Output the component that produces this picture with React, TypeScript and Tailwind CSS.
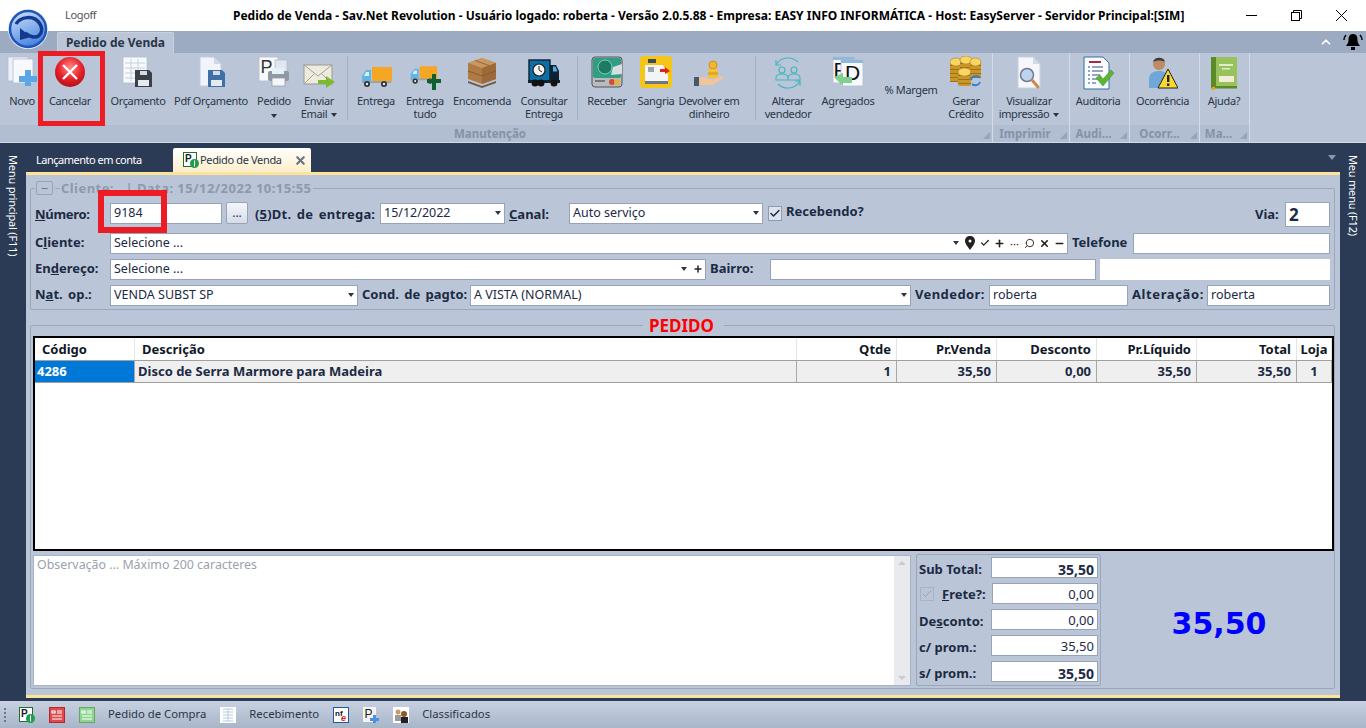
import { ReactNode } from "react"
import { Check, ChevronUp, Search, X, Minus, Plus } from "lucide-react"

const ink = "text-[#1c2a44]"

// ---- ribbon icons ----
const Sheet = ({ x, y, w, h, fill = "#f7f9fc" }: { x: number; y: number; w: number; h: number; fill?: string }) => (
  <rect x={x} y={y} width={w} height={h} fill={fill} stroke="#b4bccb" strokeWidth="0.8" />
)

const Floppy = ({ x, y, c = "#3a3f48" }: { x: number; y: number; c?: string }) => (
  <g transform={`translate(${x} ${y})`}>
    <path d="M0 0h14l3 3v14H0z" fill={c} />
    <rect x="5" y="1" width="7" height="4" fill="#d5dbe2" />
    <rect x="3" y="10" width="11" height="6" fill="#e6eaef" />
  </g>
)

const Truck = () => (
  <>
    <rect x="12" y="7" width="20" height="15" rx="1" fill="#f5a623" />
    <path d="M11 10H6l-4 6v6h9z" fill="#5db5ea" />
    <path d="M6 12h3v4H4z" fill="#d8eefb" />
    <rect x="2" y="21" width="29" height="2" fill="#9aa3ad" />
    <circle cx="7" cy="24" r="3" fill="#333" /><circle cx="7" cy="24" r="1.2" fill="#eee" />
    <circle cx="24" cy="24" r="3" fill="#333" /><circle cx="24" cy="24" r="1.2" fill="#eee" />
  </>
)

const CoinStack = ({ x, y, h, w = 12 }: { x: number; y: number; h: number; w?: number }) => (
  <g>
    <rect x={x} y={y} width={w} height={h} rx="2" fill="#c9962a" />
    {Array.from({ length: Math.floor(h / 4) }).map((_, i) => (
      <rect key={i} x={x} y={y + 3 + i * 4} width={w} height="1" fill="#9e7318" />
    ))}
    <ellipse cx={x + w / 2} cy={y} rx={w / 2} ry="4" fill="#f8d665" stroke="#b98620" strokeWidth="0.7" />
  </g>
)

const icons: Record<string, ReactNode> = {
  novo: (
    <svg width="30" height="30" viewBox="0 0 30 30">
      <Sheet x={1} y={1} w={20} h={24} fill="#eef2f8" />
      <Sheet x={6} y={3} w={20} h={24} />
      <path d="M18 14h6v6h6v6h-6v4h-6v-4h-6v-6h6z" fill="#5ba6e6" />
    </svg>
  ),
  cancelar: (
    <svg width="32" height="32" viewBox="0 0 32 32">
      <defs>
        <radialGradient id="redball" cx="50%" cy="35%" r="70%">
          <stop offset="0%" stopColor="#ff8a8a" />
          <stop offset="55%" stopColor="#e8222a" />
          <stop offset="100%" stopColor="#a90f14" />
        </radialGradient>
      </defs>
      <circle cx="16" cy="16" r="15" fill="url(#redball)" />
      <path d="M9 9l14 14M23 9L9 23" stroke="#fff" strokeWidth="2.4" />
    </svg>
  ),
  orcamento: (
    <svg width="32" height="32" viewBox="0 0 32 32">
      <Sheet x={1} y={1} w={24} h={26} />
      <path d="M3 7h20M3 12h20M3 17h12M3 22h12M9 3v22M16 3v14" stroke="#c3d3dc" strokeWidth="1" />
      <Floppy x={13} y={14} />
    </svg>
  ),
  pdf: (
    <svg width="32" height="32" viewBox="0 0 32 32">
      <path d="M5 1h14l7 7v22H5z" fill="#f1f4fb" stroke="#c3cbdc" />
      <path d="M19 1v7h7z" fill="#cfd8e8" />
      <Floppy x={13} y={14} c="#3f6fa8" />
    </svg>
  ),
  pedido: (
    <svg width="32" height="32" viewBox="0 0 32 32">
      <Sheet x={1} y={1} w={19} h={24} />
      <text x="2.5" y="17" fontFamily="Liberation Sans" fontSize="18" fill="#333">P</text>
      <Sheet x={17} y={4} w={12} h={12} fill="#dfe7ef" />
      <rect x="10" y="15" width="21" height="10" rx="2" fill="#8f98a3" />
      <rect x="14" y="12" width="12" height="6" fill="#e6f0f7" />
      <rect x="14" y="22" width="13" height="8" fill="#f4f6f9" stroke="#8f98a3" strokeWidth="0.7" />
    </svg>
  ),
  email: (
    <svg width="32" height="34" viewBox="0 0 32 34">
      <g transform="translate(0 7)">
        <rect x="1" y="2" width="28" height="19" fill="#eeeadd" stroke="#9c9a90" />
        <path d="M1 2l14 11L29 2M1 21l10-10M29 21L19 11" fill="none" stroke="#a5a396" />
        <path d="M15 17h8v-4l9 6-9 6v-4h-8z" fill="#7dbb2e" />
      </g>
    </svg>
  ),
  entrega: (
    <svg width="32" height="34" viewBox="0 0 32 34"><g transform="translate(0 4)"><Truck /></g></svg>
  ),
  tudo: (
    <svg width="32" height="34" viewBox="0 0 32 34">
      <g transform="translate(0 4) scale(.88)"><Truck /></g>
      <path d="M18 23h5v-5h4v5h5v4h-5v7h-4v-7h-5z" fill="#0f5f30" />
    </svg>
  ),
  encomenda: (
    <svg width="32" height="32" viewBox="0 0 32 32">
      <path d="M2 7l14-5 14 5v16l-14 5-14-5z" fill="#b07a45" />
      <path d="M2 7l14 5 14-5-14-5z" fill="#c9975f" />
      <path d="M16 12v16l14-5V7z" fill="#9c6a3a" />
      <path d="M2 15l14 5 14-5M9 4.500l14 5" fill="none" stroke="#7d532b" strokeWidth="0.7" />
      <path d="M2 25l14 5 14-5v2l-14 5-14-5z" fill="#6f5a44" />
    </svg>
  ),
  consultar: (
    <svg width="32" height="32" viewBox="0 0 32 32">
      <g transform="translate(0 2)">
        <rect x="1" y="2" width="21" height="21" fill="#0c6ea3" stroke="#0a2233" strokeWidth="1.4" />
        <circle cx="11" cy="12" r="6" fill="#f4f4f4" stroke="#222" strokeWidth="1.2" />
        <path d="M11 8v4l3 2" stroke="#222" fill="none" />
        <path d="M22 7h6l3 6v10h-9z" fill="#0c2233" />
        <path d="M25 8.500h2.500l2 5H25z" fill="#49aee8" />
        <rect x="0" y="22" width="32" height="3" fill="#10222f" />
        <circle cx="7" cy="25" r="3.500" fill="#111" /><circle cx="13" cy="25" r="3.500" fill="#111" /><circle cx="26" cy="25" r="3.500" fill="#111" />
      </g>
    </svg>
  ),
  receber: (
    <svg width="32" height="32" viewBox="0 0 32 32">
      <rect x="1" y="1" width="30" height="30" rx="3" fill="#b8bcc0" stroke="#555" />
      <rect x="2" y="2" width="28" height="20" rx="2" fill="#2f9e83" />
      <circle cx="14" cy="11" r="7" fill="#1f7a64" stroke="#7fd0bb" />
      <path d="M31 8l-9 3-2 8 11-1z" fill="#d8dde0" />
      <rect x="4" y="24" width="10" height="2" fill="#777" />
      <circle cx="21" cy="26" r="3" fill="#d24b3a" /><circle cx="26" cy="26" r="3" fill="#e2b23a" />
    </svg>
  ),
  sangria: (
    <svg width="32" height="32" viewBox="0 0 32 32">
      <rect x="0" y="0" width="32" height="32" rx="4" fill="#f5c518" />
      <rect x="8" y="3" width="8" height="4" fill="#3a4a5c" />
      <path d="M5 9h18l5 10v6H5z" fill="#f2f4f6" />
      <rect x="8" y="11" width="6" height="5" fill="#9aa5b0" />
      <path d="M20 13h5v-2l5 4-5 3v-2h-5z" fill="#e2231a" />
      <rect x="5" y="25" width="23" height="3" fill="#6e7884" />
    </svg>
  ),
  devolver: (
    <svg width="32" height="32" viewBox="0 0 32 32">
      <circle cx="20" cy="9" r="4" fill="#f2b632" stroke="#d28f13" />
      <rect x="15" y="13" width="10" height="3" rx="1" fill="#f1c23e" />
      <rect x="15" y="16" width="10" height="3" rx="1" fill="#e3a825" />
      <rect x="15" y="19" width="10" height="3" rx="1" fill="#f1c23e" />
      <rect x="1" y="21" width="5" height="9" fill="#48586a" />
      <path d="M6 22c4-2 7-1 10 1h5l8-3c2 0 2 2 0 3l-9 6H6z" fill="#f3c49b" />
    </svg>
  ),
  alterar: (
    <svg width="34" height="34" viewBox="0 0 34 34" fill="none" stroke="#3eb6bd" strokeWidth="1.100">
      <path d="M5 9a14 14 0 0 1 22-3M29 25a14 14 0 0 1-22 3" />
      <path d="M5 4v5h5M29 30v-5h-5" />
      <circle cx="11" cy="14" r="3" /><circle cx="23" cy="14" r="3" />
      <path d="M5 24v-2c0-3 3-4 6-4s6 1 6 4v2zM17 24v-2c0-3 3-4 6-4s6 1 6 4v2z" />
    </svg>
  ),
  agregados: (
    <svg width="32" height="32" viewBox="0 0 32 32">
      <Sheet x={1} y={1} w={21} h={26} />
      <rect x="1" y="1" width="21" height="3" fill="#8db8e0" />
      <text x="1.500" y="21" fontFamily="Liberation Sans" fontSize="21" fill="#111">P</text>
      <Sheet x={9} y={4} w={22} h={26} />
      <rect x="9" y="4" width="22" height="3" fill="#8db8e0" />
      <text x="13" y="24" fontFamily="Liberation Sans" fontSize="21" fill="#111">D</text>
      <path d="M2 21l9-4v4h9v6h-9v3z" fill="#7fcf8e" />
    </svg>
  ),
  gerar: (
    <svg width="32" height="32" viewBox="0 0 32 32">
      <CoinStack x={0} y={6} h={20} />
      <CoinStack x={10} y={4} h={18} />
      <CoinStack x={8} y={16} h={14} w={13} />
      <CoinStack x={20} y={6} h={16} w={11} />
      <path d="M21 24a5 5 0 0 1 9-2M30 26a5 5 0 0 1-8 2" fill="none" stroke="#2e7fd6" strokeWidth="1.800" />
    </svg>
  ),
  visualizar: (
    <svg width="32" height="34" viewBox="0 0 32 34">
      <path d="M5 1h15l7 7v24H5z" fill="#f6f7fb" stroke="#c9cfdc" />
      <path d="M20 1v7h7z" fill="#d3d9e4" />
      <circle cx="14" cy="19" r="6.500" fill="#bcd4ee" stroke="#6d7a91" strokeWidth="1.500" />
      <path d="M19 24l6 7" stroke="#c98a4c" strokeWidth="3" strokeLinecap="round" />
    </svg>
  ),
  auditoria: (
    <svg width="34" height="34" viewBox="0 0 34 34">
      <path d="M3 1h19l6 6v26H3z" fill="#fbfcff" stroke="#2e6fa6" />
      <rect x="8" y="5" width="12" height="2" fill="#a52a3a" />
      <path d="M7 11h2M11 11h11M7 15h2M11 15h11M7 19h2M11 19h8M7 23h2M11 23h6M7 27h2M11 27h4" stroke="#33527a" strokeWidth="1.200" />
      <path d="M15 22l4-3 3 4 8-9 3 3-11 13z" fill="#5cb531" stroke="#3d8a1d" strokeWidth="0.5" />
    </svg>
  ),
  ocorrencia: (
    <svg width="30" height="34" viewBox="0 0 30 34">
      <circle cx="11" cy="8" r="6" fill="#c08a62" />
      <path d="M5 6c1-5 11-6 12 0-3-2-9-2-12 0z" fill="#3d3d3d" />
      <path d="M1 32v-9c0-6 5-8 10-8s9 2 9 8v9z" fill="#6ea7d8" />
      <path d="M20 13l10 19H10z" fill="#f8d92f" stroke="#222" strokeWidth="1" />
      <rect x="19" y="19" width="2.400" height="7" fill="#222" />
      <rect x="19" y="27.500" width="2.400" height="2.400" fill="#222" />
    </svg>
  ),
  ajuda: (
    <svg width="28" height="34" viewBox="0 0 28 34">
      <rect x="1" y="1" width="26" height="31" fill="#97c25c" />
      <rect x="1" y="1" width="5" height="31" fill="#5b8a26" />
      <rect x="9" y="8" width="14" height="2" fill="#dfeec6" />
      <rect x="12" y="12" width="8" height="1.500" fill="#dfeec6" />
      <rect x="9" y="20" width="15" height="6" fill="#f4ecd8" />
      <rect x="1" y="30" width="26" height="2.500" fill="#5b8a26" />
      <rect x="2" y="31" width="3" height="3" fill="#f2a31a" />
    </svg>
  ),
}

// ---- ribbon ----
const Caret = () => (
  <span className="inline-block w-0 h-0 border-x-[3.5px] border-x-transparent border-t-[4px] border-t-[#2a3546] align-middle" />
)

function RibbonButton({ w, icon, label, second, caret, plain }: {
  w: number
  icon?: string
  label: string
  second?: string
  caret?: "below" | "inline"
  plain?: boolean
}) {
  return (
    <div style={{ width: w }} className="flex flex-col items-center shrink-0 whitespace-nowrap text-[11px] tracking-[-0.35px] leading-[13px] text-[#2a3546]">
      {plain ? (
        <div className="pt-[30px]">{label}</div>
      ) : (
        <>
          <div className="h-[38px] pt-[3px] flex items-start justify-center">{icon && icons[icon]}</div>
          <div className="mt-[3px]">{label}</div>
          {second && (
            <div>
              {second}
              {caret === "inline" && <span className="ml-1"><Caret /></span>}
            </div>
          )}
          {caret === "below" && <div className="mt-[1px]"><Caret /></div>}
        </>
      )}
    </div>
  )
}

const RibbonSep = ({ ml }: { ml: number }) => (
  <div style={{ marginLeft: ml }} className="w-px h-[64px] mt-[3px] bg-[#a3afc2] shrink-0" />
)

function RibbonGroup({ w, label, children, pr = 0 }: { w: number; label: string; children: ReactNode; pr?: number }) {
  return (
    <div style={{ width: w }} className="flex flex-col shrink-0 border-r border-[#d5dce7]">
      <div className="h-[72px] flex">{children}</div>
      <div className="h-[17px] bg-[#b1bdd0] flex items-center justify-center relative">
        <span style={{ paddingRight: pr }} className="text-[11.500px] font-bold text-[#8592a8]">{label}</span>
        <span className="absolute right-[2px] bottom-[3px] w-0 h-0 border-l-[7px] border-l-transparent border-b-[7px] border-b-[#96a3b8]" />
      </div>
    </div>
  )
}

function Ribbon() {
  return (
    <div className="h-[89px] bg-[#bac6d7] flex relative">
      <RibbonGroup w={993} label="Manutenção" pr={12}>
        <div className="w-[4px]" />
        <RibbonButton w={36} icon="novo" label="Novo" />
        <RibbonButton w={60} icon="cancelar" label="Cancelar" />
        <RibbonButton w={76} icon="orcamento" label="Orçamento" />
        <RibbonButton w={70} icon="pdf" label="Pdf Orçamento" />
        <RibbonButton w={56} icon="pedido" label="Pedido" caret="below" />
        <RibbonButton w={34} icon="email" label="Enviar" second="Email" caret="inline" />
        <RibbonSep ml={11} />
        <RibbonButton w={56} icon="entrega" label="Entrega" />
        <RibbonButton w={42} icon="tudo" label="Entrega" second="tudo" />
        <RibbonButton w={72} icon="encomenda" label="Encomenda" />
        <RibbonButton w={52} icon="consultar" label="Consultar" second="Entrega" />
        <RibbonSep ml={7} />
        <RibbonButton w={58} icon="receber" label="Receber" />
        <RibbonButton w={40} icon="sangria" label="Sangria" />
        <RibbonButton w={66} icon="devolver" label="Devolver em" second="dinheiro" />
        <RibbonSep ml={13} />
        <RibbonButton w={64} icon="alterar" label="Alterar" second="vendedor" />
        <RibbonButton w={56} icon="agregados" label="Agregados" />
        <RibbonButton w={70} label="% Margem" plain />
        <RibbonButton w={40} icon="gerar" label="Gerar" second="Crédito" />
      </RibbonGroup>
      <RibbonGroup w={77} label="Imprimir" pr={12}>
        <RibbonButton w={72} icon="visualizar" label="Visualizar" second="impressão" caret="inline" />
      </RibbonGroup>
      <RibbonGroup w={60} label="Audi..." pr={12}>
        <RibbonButton w={56} icon="auditoria" label="Auditoria" />
      </RibbonGroup>
      <RibbonGroup w={70} label="Ocorr..." pr={10}>
        <RibbonButton w={65} icon="ocorrencia" label="Ocorrência" />
      </RibbonGroup>
      <RibbonGroup w={50} label="Ma..." pr={12}>
        <RibbonButton w={48} icon="ajuda" label="Ajuda?" />
      </RibbonGroup>
    </div>
  )
}

// ---- form bits ----
function Label({ children, w, ml = 0, className = "" }: { children: ReactNode; w: number; ml?: number; className?: string }) {
  return (
    <div style={{ width: w, marginLeft: ml }} className={`shrink-0 whitespace-nowrap text-[13px] font-bold [word-spacing:2px] ${ink} ${className}`}>
      {children}
    </div>
  )
}

function Field({ w, ml = 0, value, caret, h = 21, noBorder, className = "", children }: {
  w: number
  ml?: number
  value?: string
  caret?: boolean
  h?: number
  noBorder?: boolean
  className?: string
  children?: ReactNode
}) {
  return (
    <div
      style={{ width: w, marginLeft: ml, height: h }}
      className={`shrink-0 bg-white flex items-center pl-[3px] text-[12.500px] ${ink} ${noBorder ? "" : "border border-[#97a3b8]"} ${className}`}
    >
      <span className="flex-1 whitespace-nowrap">{value}</span>
      {caret && <span className="mr-[3px] flex"><Caret /></span>}
      {children}
    </div>
  )
}

const U = ({ children }: { children: ReactNode }) => <span className="underline">{children}</span>

const Slot = ({ children }: { children: ReactNode }) => (
  <span className="w-[15px] flex items-center justify-center text-[#222]">{children}</span>
)

const columns = [
  { name: "Código", value: "4286", left: true },
  { name: "Descrição", value: "Disco de Serra Marmore para Madeira", left: true },
  { name: "Qtde", value: "1" },
  { name: "Pr.Venda", value: "35,50" },
  { name: "Desconto", value: "0,00" },
  { name: "Pr.Líquido", value: "35,50" },
  { name: "Total", value: "35,50" },
  { name: "Loja", value: "1", center: true },
]

function ItemsTable() {
  return (
    <div className="w-[1301px] h-[215px] border-2 border-black bg-white">
      <div className="grid grid-cols-[100px_662px_100px_100px_100px_100px_100px_35px] h-[23px] border-b border-[#a0a0a0]">
        {columns.map((c) => (
          <div
            key={c.name}
            className={`border-r border-[#e4e4e4] text-[13px] font-bold text-[#101828] flex items-center px-[5px] pt-[1px] ${
              c.left ? "justify-start pl-[7px]" : c.center ? "justify-center" : "justify-end"
            }`}
          >
            {c.name}
          </div>
        ))}
      </div>
      <div className="grid grid-cols-[100px_662px_100px_100px_100px_100px_100px_35px] h-[22px] border-b border-[#a0a0a0] bg-[#efefef]">
        {columns.map((c, i) => (
          <div
            key={c.name}
            className={`border-r border-[#a8a8a8] text-[13px] font-bold flex items-center px-[5px] ${
              i === 0 ? "bg-[#0078d7] text-white pl-[2px]" : "text-[#1c2a44]"
            } ${c.left ? "justify-start" : c.center ? "justify-center" : "justify-end"} ${i === 1 ? "pl-[3px]" : ""}`}
          >
            {c.value}
          </div>
        ))}
      </div>
    </div>
  )
}

const totals = [
  { label: "Sub Total:", value: "35,50", bold: true },
  { label: "Frete?:", value: "0,00", frete: true },
  { label: "Desconto:", value: "0,00" },
  { label: "c/ prom.:", value: "35,50" },
  { label: "s/ prom.:", value: "35,50", bold: true },
]

function Totals() {
  return (
    <div className="w-[185px] h-[132px] ml-[5px] -mt-[1px] border border-[#9aa7bd] rounded-[2px] pl-[2px] pt-[2px] flex flex-col gap-[5px]">
      {totals.map((t) => (
        <div key={t.label} className="flex items-center h-[21px]">
          {t.frete ? (
            <div className={`w-[73px] flex items-center text-[13px] font-bold ${ink}`}>
              <span className="w-[14px] h-[14px] ml-[1px] border border-[#a8b3c6] flex items-center justify-center">
                <Check size={12} className="text-[#97a3b5]" />
              </span>
              <span className="ml-[8px] pt-[3px] whitespace-nowrap"><U>F</U>rete?:</span>
            </div>
          ) : (
            <div className={`w-[72px] pt-[4px] whitespace-nowrap text-[13px] font-bold ${ink}`}>
              {t.label === "Desconto:" ? <>De<U>s</U>conto:</> : t.label}
            </div>
          )}
          <div className={`h-[21px] pt-[3px] bg-white border border-[#97a3b8] flex items-center justify-end pr-[3px] ${t.frete ? "w-[106px]" : "w-[107px]"} ${t.bold ? "font-bold text-[14px]" : "text-[13px]"} ${ink}`}>
            {t.value}
          </div>
        </div>
      ))}
    </div>
  )
}

// ---- small status icons ----
const Mini = ({ children }: { children: ReactNode }) => (
  <svg width="16" height="16" viewBox="0 0 16 16" className="shrink-0">{children}</svg>
)

const PedidoMini = () => (
  <Mini>
    <rect x="0.500" y="0.500" width="13" height="14" fill="#fff" stroke="#1f6b3a" />
    <text x="2" y="10" fontFamily="Liberation Sans" fontWeight="700" fontSize="10" fill="#222">P</text>
    <circle cx="11.500" cy="11.500" r="4.500" fill="#1f9e4f" />
    <rect x="11" y="8.500" width="1" height="6" fill="#fff" />
  </Mini>
)

const FormMini = ({ c, bg }: { c: string; bg: string }) => (
  <Mini>
    <rect x="0.500" y="0.500" width="15" height="15" fill={bg} stroke={c} />
    <path d="M3 4h3v2H3zM8 4h5M8 6h5M3 9h10M3 12h10" stroke="#fff" strokeWidth="1.200" fill="none" />
  </Mini>
)

export default function App() {
  return (
    <div className="w-[1366px] h-[728px] overflow-hidden flex flex-col bg-[#2b3a55] relative font-['Noto_Sans',sans-serif]">
      {/* title bar */}
      <div className="h-[31px] bg-white flex items-center shrink-0">
        <span className="ml-[65px] w-[168px] text-[11px] tracking-[-0.35px] text-[#555]">Logoff</span>
        <span className="w-[898px] text-center whitespace-nowrap text-[12px] font-bold text-black">
          Pedido de Venda - Sav.Net Revolution - Usuário logado: roberta - Versão 2.0.5.88 - Empresa: EASY INFO INFORMÁTICA - Host: EasyServer - Servidor Principal:[SIM]
        </span>
        <div className="flex-1 flex justify-end items-center">
          <svg width="11" height="11" viewBox="0 0 11 11" className="mr-[34px]"><path d="M0 5.500h11" stroke="#000" /></svg>
          <svg width="11" height="11" viewBox="0 0 11 11" className="mr-[34px]" fill="none" stroke="#000"><path d="M2.500 2.500V.5h8v8h-2" /><rect x="0.500" y="2.500" width="8" height="8" /></svg>
          <svg width="11" height="11" viewBox="0 0 11 11" className="mr-[19px]"><path d="M0 0l11 11M11 0L0 11" stroke="#000" /></svg>
        </div>
      </div>

      {/* ribbon tab row */}
      <div className="h-[22px] bg-[#9dabc2] flex items-end shrink-0">
        <div className="ml-[57px] w-[117px] h-[21px] bg-[#bac6d7] border border-b-0 border-[#c6d0df] rounded-t-[2px] flex items-center justify-center text-[12px] font-bold text-[#2a3546]">
          Pedido de Venda
        </div>
        <div className="flex-1 flex justify-end items-center h-full">
          <ChevronUp size={14} strokeWidth={3} className="text-white mr-[9px]" />
          <svg width="22" height="20" viewBox="0 0 22 20" className="mr-[2px]">
            <path d="M11 2c4 0 4.500 3 4.500 6.500 0 2 1 3.500 2.500 5.500H4c1.500-2 2.500-3.500 2.500-5.500C6.500 5 7 2 11 2z" fill="#000" />
            <rect x="9" y="15" width="4" height="3" fill="#000" />
            <path d="M4 3C2.500 4.500 2 6 2 8M18 3c1.500 1.500 2 3 2 5" fill="none" stroke="#000" strokeWidth="1.500" />
          </svg>
        </div>
      </div>

      <Ribbon />
      <div className="h-px bg-[#d3dae5] shrink-0" />

      {/* work area */}
      <div className="h-[558px] flex shrink-0">
        <div className="w-[26px] shrink-0 pt-[12px] flex items-center justify-start text-[11px] tracking-[-0.2px] text-white [writing-mode:vertical-rl]">
          Menu principal (F11)
        </div>

        <div className="w-[1314px] shrink-0">
          {/* doc tabs */}
          <div className="h-[29px] flex items-end relative">
            <div className="ml-[10px] w-[137px] h-[24px] flex items-center text-[11px] tracking-[-0.5px] text-white">Lançamento em conta</div>
            <div className="w-[138px] h-[24px] rounded-t-[2px] bg-gradient-to-b from-white to-[#fdeec9] flex items-center pl-[10px] text-[11px] tracking-[-0.35px] text-[#2a3546]">
              <PedidoMini />
              <span className="ml-[1px] whitespace-nowrap">Pedido de Venda</span>
              <X size={13} strokeWidth={4} className="ml-[12px] text-[#6d7480]" />
            </div>
            <span className="absolute right-[4px] top-[12px] w-0 h-0 border-x-[4px] border-x-transparent border-t-[5px] border-t-[#8b97ab]" />
          </div>

          {/* document body */}
          <div className="h-[526px] bg-[#bac6d7] border-y-[3px] border-[#fde29c] px-[4px] pt-[6px]">
            <fieldset className="w-[1305px] h-[129px] border border-[#9aa7bd] rounded-[2px] pl-[4px] pr-[4px]">
              <legend className="ml-0 px-[1px] flex items-center text-[13px] font-bold text-[#8d99ae] leading-[14px]">
                <span className="w-[17px] h-[14px] mr-[2px] border border-[#97a3b8] rounded-[2px] flex items-center justify-center text-[#6f7c92] font-normal">−</span>
                <span className="w-[5px] h-px bg-[#9aa7bd] mr-[1px]" />
                <span className="whitespace-pre tracking-[0.45px]">Cliente:   | Data: 15/12/2022 10:15:55</span>
              </legend>

              <div className="flex items-center h-[26px] mt-[5px] mb-[4px]">
                <Label w={75} className="pt-[4px] tracking-[-0.3px]"><U>N</U>úmero:</Label>
                <Field w={112} value="9184" />
                <button className="w-[22px] h-[22px] ml-[4px] shrink-0 border border-[#97a3b8] rounded-[2px] bg-gradient-to-b from-[#f4f6fa] to-[#d6dde8] text-[12px] text-[#2a3546]">...</button>
                <Label w={120} ml={7} className="pt-[4px] tracking-[0.2px]">(<U>5</U>)Dt. de entrega:</Label>
                <Field w={125} ml={5} value="15/12/2022" caret />
                <Label w={40} ml={4} className="pt-[4px]"><U>C</U>anal:</Label>
                <Field w={194} ml={20} value="Auto serviço" caret />
                <span className="w-[14px] h-[15px] ml-[5px] shrink-0 border border-[#8f9bb0] bg-[#dde3ec] flex items-center justify-center">
                  <Check size={13} strokeWidth={3} className="text-[#1c2a44]" />
                </span>
                <Label w={80} ml={4} className="pb-[2px]">Recebendo?</Label>
                <div className="flex-1" />
                <Label w={27} className="pt-[4px]">Via:</Label>
                <Field w={45} ml={3} h={25} className="mt-[2px]">
                  <span className="absolute text-[17px] font-bold leading-none">2</span>
                </Field>
              </div>

              <div className="flex items-center h-[26px]">
                <Label w={75}>C<U>l</U>iente:</Label>
                <Field w={958} value="Selecione ..." caret>
                  <Slot>
                    <svg width="10" height="14" viewBox="0 0 10 14"><path fillRule="evenodd" d="M5 0c3 0 5 2 5 5 0 3-3 6-5 9-2-3-5-6-5-9 0-3 2-5 5-5zm0 3.500a1.500 1.500 0 1 0 0 3 1.500 1.500 0 0 0 0-3z" fill="#222" /></svg>
                  </Slot>
                  <Slot><Check size={10} strokeWidth={3} /></Slot>
                  <Slot><Plus size={11} strokeWidth={3.500} /></Slot>
                  <Slot><span className="text-[11px] leading-none">···</span></Slot>
                  <Slot><Search size={11} className="-scale-x-100" /></Slot>
                  <Slot><X size={11} strokeWidth={3.500} /></Slot>
                  <Slot><Minus size={11} strokeWidth={3.500} /></Slot>
                </Field>
                <Label w={57} ml={4}>Telefone</Label>
                <Field w={197} ml={4} />
              </div>

              <div className="flex items-center h-[26px]">
                <Label w={75}>En<U>d</U>ereço:</Label>
                <Field w={596} value="Selecione ..." caret>
                  <Slot><Plus size={10} strokeWidth={3.500} /></Slot>
                </Field>
                <Label w={60} ml={4}>Bairro:</Label>
                <Field w={326} />
                <Field w={230} ml={4} noBorder />
              </div>

              <div className="flex items-center h-[26px]">
                <Label w={75}>N<U>a</U>t. op.:</Label>
                <Field w={248} value="VENDA SUBST SP" caret />
                <Label w={104} ml={4} className="[word-spacing:1px]">Cond. de <U>p</U>agto:</Label>
                <Field w={441} ml={4} value="A VISTA (NORMAL)" caret />
                <Label w={70} ml={4} className="tracking-[0.4px]">Vendedor:</Label>
                <Field w={139} ml={4} value="roberta" />
                <Label w={71} ml={4} className="tracking-[0.6px]">Alteração:</Label>
                <Field w={123} ml={4} value="roberta" />
              </div>
            </fieldset>

            <fieldset className="w-[1305px] h-[371px] mt-[8px] border border-[#9aa7bd] rounded-[2px] pl-[2px]">
              <legend className="mx-auto pl-[6px] pr-[10px] text-[17px] leading-[15px] font-bold text-[#ff0000]">PEDIDO</legend>
              <div className="mt-[3px]"><ItemsTable /></div>
              <div className="flex mt-[4px]">
                <div className="w-[878px] h-[131px] bg-white border border-[#a8b3c6] flex text-[12.400px] text-[#9aa2ad]">
                  <div className="flex-1 pl-[3px]">Observação ... Máximo 200 caracteres</div>
                  <div className="w-[16px] bg-[#e8eaed] flex flex-col items-center justify-between py-[5px]">
                    <span className="w-0 h-0 border-x-[4px] border-x-transparent border-b-[4px] border-b-[#c9ccd2]" />
                    <span className="w-0 h-0 border-x-[4px] border-x-transparent border-t-[4px] border-t-[#c9ccd2]" />
                  </div>
                </div>
                <Totals />
                <div className="flex-1 flex items-center justify-center pt-[5px] pl-[3px]">
                  <span className="font-['DejaVu_Sans',sans-serif] text-[30px] font-bold text-[#0000ff]">35,50</span>
                </div>
              </div>
            </fieldset>
          </div>
        </div>

        <div className="w-[26px] shrink-0 pt-[12px] flex items-center justify-start text-[11px] tracking-[-0.2px] text-white [writing-mode:vertical-rl]">
          Meu menu (F12)
        </div>
      </div>

      {/* status bar */}
      <div className="flex-1 bg-gradient-to-b from-[#c7d1e1] to-[#a9b5c9] flex items-center text-[11.300px] text-[#2a3546]">
        <span className="ml-[4px] mr-[13px] w-[2px] h-[14px] border-l-2 border-dotted border-[#6b788f]" />
        <PedidoMini />
        <span className="ml-[14px]"><FormMini c="#b3282d" bg="#e04a4a" /></span>
        <span className="ml-[14px]"><FormMini c="#6aa36e" bg="#8ed690" /></span>
        <span className="ml-[13px] whitespace-nowrap">Pedido de Compra</span>
        <span className="ml-[14px]">
          <Mini>
            <rect x="0" y="0" width="16" height="16" fill="#fff" />
            <path d="M3 2h10M3 5h10M3 8h10M3 11h10M3 14h10M8 2v12" stroke="#b5cbd8" />
          </Mini>
        </span>
        <span className="ml-[13px] whitespace-nowrap">Recebimento</span>
        <span className="ml-[14px]">
          <Mini>
            <rect x="0.500" y="0.500" width="15" height="15" fill="#fff" stroke="#1c5c9c" />
            <text x="2" y="9" fontFamily="Liberation Sans" fontWeight="700" fontSize="8" fill="#111">nf</text>
            <text x="8" y="14" fontFamily="Liberation Sans" fontWeight="700" fontStyle="italic" fontSize="9" fill="#d22">e</text>
          </Mini>
        </span>
        <span className="ml-[14px]">
          <Mini>
            <rect x="0" y="0" width="13" height="15" fill="#f3f3f3" />
            <text x="1.500" y="11" fontFamily="Liberation Sans" fontSize="12" fill="#222">P</text>
            <path d="M10 8h3v3h3v3h-3v2h-3v-2H7v-3h3z" fill="#4d8fe0" />
          </Mini>
        </span>
        <span className="ml-[14px]">
          <Mini>
            <rect width="16" height="16" fill="#fff" />
            <circle cx="5" cy="5" r="2.500" fill="#c89872" />
            <rect x="2" y="8" width="6" height="6" fill="#9a9a9a" />
            <circle cx="11" cy="7" r="3" fill="#8a5a2b" />
            <rect x="8" y="10" width="7" height="6" fill="#222" />
          </Mini>
        </span>
        <span className="ml-[13px] whitespace-nowrap">Classificados</span>
      </div>

      {/* logo */}
      <svg width="42" height="42" viewBox="0 0 42 42" className="absolute left-[7px] top-[8px]">
        <defs>
          <linearGradient id="logoBall" x1="0.300" y1="0" x2="0.700" y2="1">
            <stop offset="0%" stopColor="#c4d9f6" />
            <stop offset="55%" stopColor="#7fabea" />
            <stop offset="100%" stopColor="#3f7bdc" />
          </linearGradient>
        </defs>
        <circle cx="21" cy="21" r="20" fill="#eaf1fb" />
        <circle cx="21" cy="21" r="18" fill="url(#logoBall)" stroke="#1f55b8" strokeWidth="2.500" />
        <path d="M9 16C13 9 27 6 33 16c4 7 0 14-7 13-3-1-6-2-8-4" fill="none" stroke="#123a8e" strokeWidth="3.500" />
        <path d="M13 20v12l11-3z" fill="#123a8e" />
      </svg>

      {/* red annotation boxes */}
      <div className="absolute left-[38px] top-[51px] w-[67px] h-[75px] border-[5px] border-[#ed1c24]" />
      <div className="absolute left-[98px] top-[190px] w-[69px] h-[43px] border-[6px] border-[#ed1c24]" />
    </div>
  )
}
